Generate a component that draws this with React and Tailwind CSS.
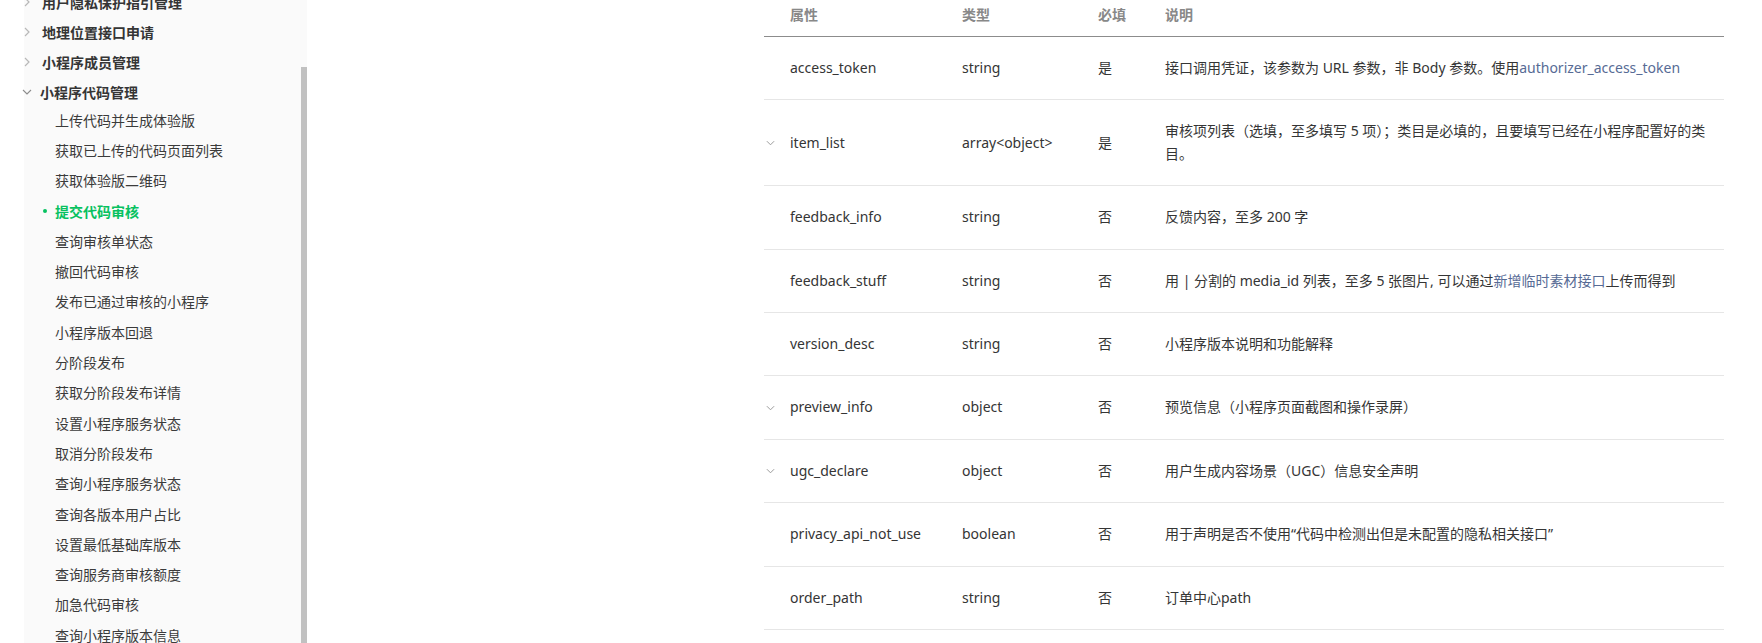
import React from 'react';

const groups = ['用户隐私保护指引管理', '地理位置接口申请', '小程序成员管理'];

const children = [
  '上传代码并生成体验版',
  '获取已上传的代码页面列表',
  '获取体验版二维码',
  '提交代码审核',
  '查询审核单状态',
  '撤回代码审核',
  '发布已通过审核的小程序',
  '小程序版本回退',
  '分阶段发布',
  '获取分阶段发布详情',
  '设置小程序服务状态',
  '取消分阶段发布',
  '查询小程序服务状态',
  '查询各版本用户占比',
  '设置最低基础库版本',
  '查询服务商审核额度',
  '加急代码审核',
  '查询小程序版本信息',
];

const Link = ({ children }) => <span className="text-[#576b95]">{children}</span>;

const rows = [
  {
    name: 'access_token',
    type: 'string',
    req: '是',
    desc: (
      <>
        接口调用凭证，该参数为 URL 参数，非 Body 参数。使用<Link>authorizer_access_token</Link>
      </>
    ),
  },
  {
    name: 'item_list',
    type: 'array<object>',
    req: '是',
    expand: true,
    desc: '审核项列表（选填，至多填写 5 项）；类目是必填的，且要填写已经在小程序配置好的类目。',
  },
  { name: 'feedback_info', type: 'string', req: '否', desc: '反馈内容，至多 200 字' },
  {
    name: 'feedback_stuff',
    type: 'string',
    req: '否',
    desc: (
      <>
        用 | 分割的 media_id 列表，至多 5 张图片, 可以通过<Link>新增临时素材接口</Link>上传而得到
      </>
    ),
  },
  { name: 'version_desc', type: 'string', req: '否', desc: '小程序版本说明和功能解释' },
  { name: 'preview_info', type: 'object', req: '否', expand: true, desc: '预览信息（小程序页面截图和操作录屏）' },
  { name: 'ugc_declare', type: 'object', req: '否', expand: true, desc: '用户生成内容场景（UGC）信息安全声明' },
  {
    name: 'privacy_api_not_use',
    type: 'boolean',
    req: '否',
    desc: '用于声明是否不使用“代码中检测出但是未配置的隐私相关接口”',
  },
  { name: 'order_path', type: 'string', req: '否', desc: '订单中心path' },
];

function ChevronRight() {
  return (
    <svg width="7" height="10" viewBox="0 0 7 10" fill="none">
      <polyline points="1,1 5,5 1,9" stroke="#b8b8b8" strokeWidth="1.2" />
    </svg>
  );
}

function ChevronDown({ color = '#8c8c8c', w = 10 }) {
  return (
    <svg width={w} height="6" viewBox="0 0 10 6" fill="none">
      <polyline points="1,1 5,5 9,1" stroke={color} strokeWidth="1.1" />
    </svg>
  );
}

function Sidebar() {
  return (
    <aside className="flex w-[283px] shrink-0 bg-[#fafafa] h-full">
      <div className="w-[277px] -mt-[13px] text-[14px] text-[#353535]">
        {groups.map((g) => (
          <div key={g} className="h-[30px] flex items-center">
            <div className="w-[18px] flex items-center">
              <ChevronRight />
            </div>
            <span className="font-bold">{g}</span>
          </div>
        ))}
        <div className="h-[30px] flex items-center">
          <div className="w-[18px] -ml-[2px] pr-[2px] flex items-center">
            <ChevronDown />
          </div>
          <span className="font-bold">小程序代码管理</span>
        </div>
        <div className="-mt-[2px]">
          {children.map((c) => {
            const active = c === '提交代码审核';
            return (
              <div key={c} className="h-[30.3px] flex items-center pl-[17px]">
                <div className="w-[14px] flex items-center">
                  {active && <span className="ml-[2px] w-[4px] h-[4px] rounded-full bg-[#07c160]" />}
                </div>
                <span className={active ? 'font-bold text-[#07c160]' : 'text-[#3b3b3b]'}>{c}</span>
              </div>
            );
          })}
        </div>
      </div>
      <div className="w-[6px] flex flex-col">
        <div className="h-[67px]" />
        <div className="flex-1 bg-[#c1c1c1]" />
      </div>
    </aside>
  );
}

function ParamTable() {
  return (
    <div className="w-[960px] ml-[457px] text-[14px] text-[#353535]">
      <div className="h-[37px] flex items-end pb-[10px] border-b border-[#8c8c8c] font-semibold text-[#888] leading-[22px]">
        <div className="w-[26px]" />
        <div className="w-[172px]">属性</div>
        <div className="w-[136px]">类型</div>
        <div className="w-[67px]">必填</div>
        <div className="flex-1">说明</div>
      </div>
      {rows.map((r) => (
        <div key={r.name} className="flex items-center py-[20px] border-b border-[#e6e6e6] leading-[22.4px]">
          <div className="w-[26px] flex items-center pl-[2px]">{r.expand && <ChevronDown color="#9a9a9a" w={9} />}</div>
          <div className="w-[172px]">{r.name}</div>
          <div className="w-[136px]">{r.type}</div>
          <div className="w-[67px]">{r.req}</div>
          <div className="flex-1 pr-[10px]">{r.desc}</div>
        </div>
      ))}
    </div>
  );
}

export default function App() {
  return (
    <div className="w-[1762px] h-[643px] overflow-hidden bg-white flex font-['Noto_Sans','Noto_Sans_CJK_SC',sans-serif]">
      <div className="w-[24px] shrink-0" />
      <Sidebar />
      <ParamTable />
    </div>
  );
}
